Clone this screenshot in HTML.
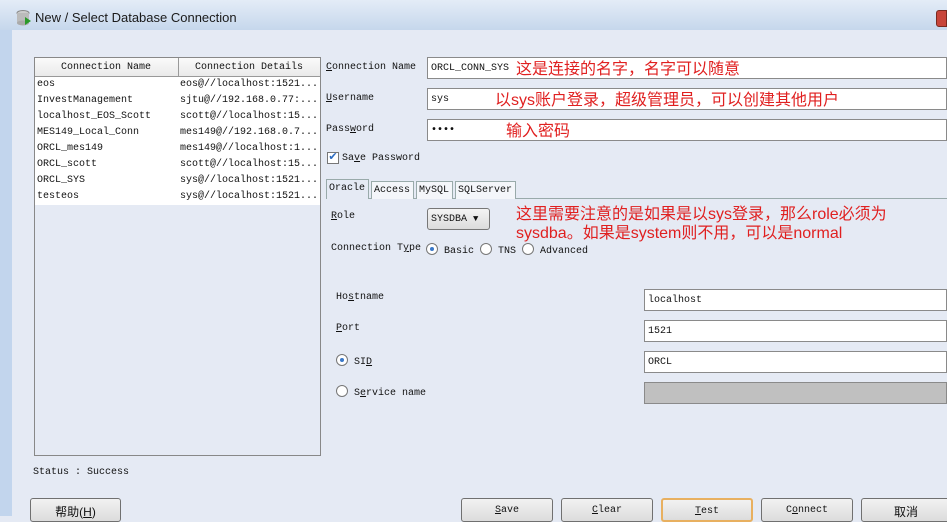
<!DOCTYPE html>
<html><head><meta charset="utf-8"><style>
*{margin:0;padding:0;box-sizing:border-box}
body{width:947px;height:516px;overflow:hidden;position:relative;background:#e5eaf4;font-family:"Liberation Mono","Noto Sans CJK SC",monospace;font-size:10px;color:#111}
.a{position:absolute;white-space:nowrap}
.title{left:0;top:0;width:947px;height:30px;background:linear-gradient(#e4ecf7,#c6d7ec)}
.frame{left:0;top:30px;width:12px;height:486px;background:#c2d5ed}
.inp{position:absolute;background:#fff;border:1px solid #8a8a8a;height:22px;padding:5px 3px;white-space:nowrap}
.red{position:absolute;color:#e02020;font-family:"Liberation Sans","Noto Sans CJK SC",sans-serif;font-size:16px;white-space:nowrap}
.row{position:absolute;left:1px;width:284px;height:16px;font-size:10px;line-height:16px}
.row span{position:absolute;top:0}
.tab{position:absolute;top:181px;height:18px;border:1px solid #9aa;border-bottom:none;background:#f4f6fa;padding:3px 2px;font-size:10px}
.btn{position:absolute;top:498px;height:24px;width:92px;border:1px solid #707070;border-radius:3px;background:linear-gradient(#f2f2f2,#dcdcdc);text-align:center;padding-top:6px;font-size:10px}
.rad{display:inline-block;width:12px;height:12px;border:1px solid #777;border-radius:50%;background:#fff;vertical-align:-2px;position:relative}
.rad.on:after{content:"";position:absolute;left:3px;top:3px;width:4px;height:4px;border-radius:50%;background:#3a78c8}
u{text-decoration:underline}
</style></head><body>
<div class="a title"></div>
<div class="a frame"></div>
<svg class="a" style="left:16px;top:9px" width="16" height="17"><ellipse cx="7" cy="4" rx="6" ry="2.5" fill="#ccc" stroke="#888"/><rect x="1" y="4" width="12" height="10" fill="#bbb"/><ellipse cx="7" cy="14" rx="6" ry="2.5" fill="#aaa"/><path d="M9 8 L15 12 L9 16Z" fill="#2a9a2a"/></svg>
<div class="a" style="left:35px;top:10px;font-family:'Liberation Sans',sans-serif;font-size:13px;color:#1a1a1a">New / Select Database Connection</div>
<div class="a" style="left:936px;top:10px;width:11px;height:17px;background:#c8453a;border:1px solid #7a2a20;border-radius:3px 0 0 3px"></div>

<div class="a" style="left:34px;top:57px;width:287px;height:399px;border:1px solid #888;background:#e5eaf4">
 <div class="a" style="left:0;top:0;width:285px;height:19px;background:linear-gradient(#fafafa,#eaeaea);border-bottom:1px solid #999"></div>
 <div class="a" style="left:143px;top:0;width:1px;height:19px;background:#999"></div>
 <div class="a" style="left:26px;top:4px">Connection Name</div>
 <div class="a" style="left:160px;top:4px">Connection Details</div>
 <div class="a" style="left:0;top:19px;width:285px;height:128px;background:#fff"></div>
 <div class="row" style="top:19px"><span style="left:1px">eos</span><span style="left:144px">eos@//localhost:1521...</span></div>
 <div class="row" style="top:35px"><span style="left:1px">InvestManagement</span><span style="left:144px">sjtu@//192.168.0.77:...</span></div>
 <div class="row" style="top:51px"><span style="left:1px">localhost_EOS_Scott</span><span style="left:144px">scott@//localhost:15...</span></div>
 <div class="row" style="top:67px"><span style="left:1px">MES149_Local_Conn</span><span style="left:144px">mes149@//192.168.0.7...</span></div>
 <div class="row" style="top:83px"><span style="left:1px">ORCL_mes149</span><span style="left:144px">mes149@//localhost:1...</span></div>
 <div class="row" style="top:99px"><span style="left:1px">ORCL_scott</span><span style="left:144px">scott@//localhost:15...</span></div>
 <div class="row" style="top:115px"><span style="left:1px">ORCL_SYS</span><span style="left:144px">sys@//localhost:1521...</span></div>
 <div class="row" style="top:131px"><span style="left:1px">testeos</span><span style="left:144px">sys@//localhost:1521...</span></div>
</div>

<div class="a" style="left:326px;top:62px"><u>C</u>onnection Name</div>
<div class="a" style="left:326px;top:93px"><u>U</u>sername</div>
<div class="a" style="left:326px;top:124px">Pass<u>w</u>ord</div>
<div class="inp" style="left:427px;top:57px;width:520px">ORCL_CONN_SYS</div>
<div class="inp" style="left:427px;top:88px;width:520px">sys</div>
<div class="inp" style="left:427px;top:119px;width:520px;font-weight:bold">••••</div>
<div class="red" style="left:516px;top:55px">这是连接的名字，名字可以随意</div>
<div class="red" style="left:495px;top:86px">以sys账户登录，超级管理员，可以创建其他用户</div>
<div class="red" style="left:506px;top:117px">输入密码</div>

<div class="a" style="left:327px;top:152px;width:12px;height:12px;border:1px solid #777;background:#fff;color:#2a6ac0;font-size:11px;line-height:10px;text-align:center">✔</div>
<div class="a" style="left:342px;top:153px">Sa<u>v</u>e Password</div>

<div class="a" style="left:326px;top:198px;width:621px;height:1px;background:#9aa"></div>
<div class="tab" style="left:326px;top:179px;height:20px;width:43px;background:#e5eaf4">Oracle</div>
<div class="tab" style="left:371px;width:43px">Access</div>
<div class="tab" style="left:416px;width:37px">MySQL</div>
<div class="tab" style="left:455px;width:61px">SQLServer</div>

<div class="a" style="left:331px;top:211px"><u>R</u>ole</div>
<div class="a" style="left:427px;top:208px;width:63px;height:22px;border:1px solid #777;border-radius:3px;background:linear-gradient(#f4f4f4,#dcdcdc);padding:5px 3px">SYSDBA <span style="font-size:9px">▼</span></div>
<div class="red" style="left:516px;top:205px;line-height:19px">这里需要注意的是如果是以sys登录，那么role必须为<br>sysdba。如果是system则不用，可以是normal</div>
<div class="a" style="left:331px;top:243px">Connection T<u>y</u>pe</div>
<div class="a" style="left:426px;top:243px"><span class="rad on"></span> Basic <span class="rad"></span> TNS <span class="rad"></span> Advanced</div>

<div class="a" style="left:336px;top:292px">Ho<u>s</u>tname</div>
<div class="a" style="left:336px;top:323px"><u>P</u>ort</div>
<div class="a" style="left:336px;top:354px"><span class="rad on"></span> SI<u>D</u></div>
<div class="a" style="left:336px;top:385px"><span class="rad"></span> S<u>e</u>rvice name</div>
<div class="inp" style="left:644px;top:289px;width:303px">localhost</div>
<div class="inp" style="left:644px;top:320px;width:303px">1521</div>
<div class="inp" style="left:644px;top:351px;width:303px">ORCL</div>
<div class="inp" style="left:644px;top:382px;width:303px;background:#c0c0c0"></div>

<div class="a" style="left:33px;top:467px">Status : Success</div>
<div class="btn" style="left:30px;width:91px;font-family:'Liberation Sans','Noto Sans CJK SC',sans-serif;font-size:12px;padding-top:4px">帮助(<u>H</u>)</div>
<div class="btn" style="left:461px"><u>S</u>ave</div>
<div class="btn" style="left:561px"><u>C</u>lear</div>
<div class="btn" style="left:661px;border:2px solid #e8b060"><u>T</u>est</div>
<div class="btn" style="left:761px">C<u>o</u>nnect</div>
<div class="btn" style="left:861px;width:90px;font-family:'Liberation Sans','Noto Sans CJK SC',sans-serif;font-size:12px;padding-top:4px">取消</div>
</body></html>
